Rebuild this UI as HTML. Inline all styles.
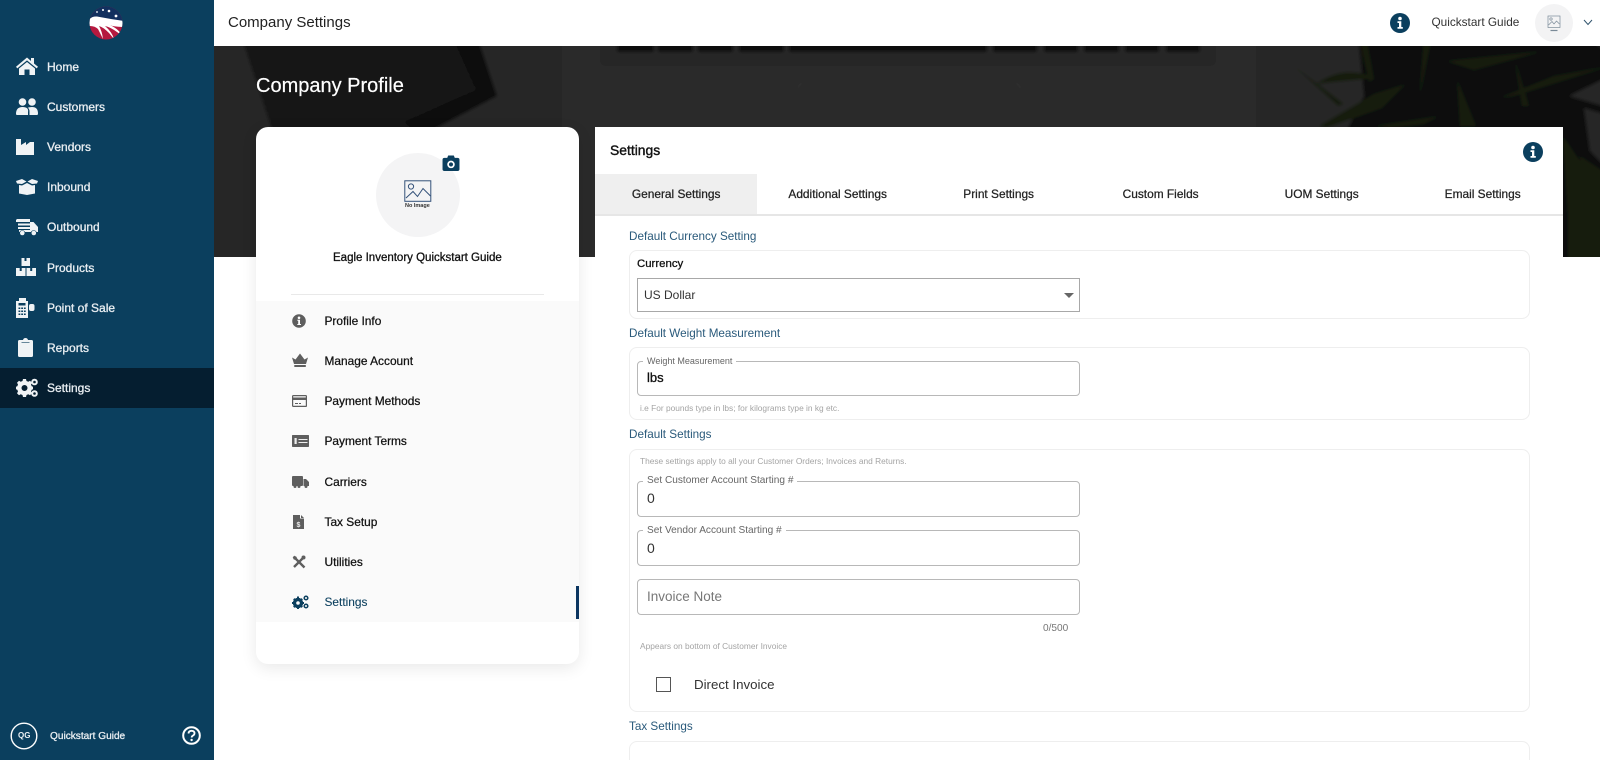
<!DOCTYPE html>
<html><head><meta charset="utf-8"><title>Company Settings</title>
<style>
*{box-sizing:border-box}
html,body{margin:0;padding:0;width:1600px;height:760px;overflow:hidden;background:#fff;font-family:"Liberation Sans",sans-serif;color:#000}
body{position:relative;filter:blur(.3px)}
.a{position:absolute}
.t{position:absolute;white-space:nowrap;line-height:1}
.side{left:0;top:0;width:214px;height:760px;background:#0b3f5e}
.nav{color:#e9eef2;font-size:12px;left:47px;-webkit-text-stroke:.3px #e9eef2}
.prof{font-size:11.9px;left:324.5px;color:#111;-webkit-text-stroke:.25px #111}
.tab{position:absolute;top:174px;width:161.3px;height:40px;line-height:40px;text-align:center;font-size:11.9px;color:#222;-webkit-text-stroke:.25px #222}
.sec{left:629px;color:#2a5a7b;font-size:11.7px}
.fs{position:absolute;left:629px;width:901px;border:1px solid #eeeeee;border-radius:8px}
.inp{position:absolute;left:637px;width:443px;border:1.5px solid #b8b8b8;border-radius:4px;background:#fff}
.lab{position:absolute;left:643px;background:#fff;padding:0 4px;font-size:10.1px;line-height:10px;color:#666;white-space:nowrap}
.help{left:640px;font-size:8.35px;color:#a4a4a4}
.val{left:647px;font-size:14px;color:#333}
svg{position:absolute;display:block}
</style></head>
<body>
<!-- hero -->
<svg class="a" style="left:214px;top:46px" width="1386" height="211" viewBox="0 0 1386 211">
<defs>
<pattern id="dots" width="5" height="5" patternUnits="userSpaceOnUse" patternTransform="rotate(25)"><rect width="5" height="5" fill="#131313"/><circle cx="2.500" cy="2.500" r="1" fill="#1d1d1d"/></pattern>
<filter id="bl"><feGaussianBlur stdDeviation="1.500"/></filter>
</defs>
<rect width="1386" height="211" fill="#2a2a2a"/>
<g filter="url(#bl)">
<rect x="-10" y="-10" width="358" height="231" fill="#252525"/>
<path d="M27 -10H263L283 50 207 90H60Z" fill="url(#dots)"/>
<path d="M238 -10H263L283 50 207 90 190 76 262 44Z" fill="#0d0d0d"/>
<rect x="348" y="-10" width="694" height="231" fill="#2c2c2c"/>
<path d="M386 -10H1002V14Q1002 20 995 20H393Q386 20 386 14Z" fill="#272727"/>
<g fill="#0f0f0f">
<rect x="403" y="-8" width="37" height="14" rx="2"/>
<rect x="444" y="-8" width="35" height="14" rx="2"/>
<rect x="484" y="-8" width="35" height="14" rx="2"/>
<rect x="525" y="-8" width="45" height="14" rx="2"/>
<rect x="575" y="-8" width="198" height="14" rx="2"/>
<rect x="779" y="-8" width="44" height="14" rx="2"/>
<rect x="830" y="-8" width="34" height="14" rx="2"/>
<rect x="870" y="-8" width="35" height="14" rx="2"/>
<rect x="911" y="-8" width="34" height="14" rx="2"/>
<rect x="952" y="-8" width="34" height="14" rx="2"/>
</g>
<rect x="583" y="37" width="224" height="180" rx="8" fill="#2c2c2c" stroke="#323232" stroke-width="1"/>
<rect x="1042" y="-10" width="354" height="231" fill="#262626"/>
<path d="M1144 -10H1396V30L1355 50 1396 62V221H1200L1130 90 1150 50Z" fill="#090a08"/>
<path d="M1370 -10H1396V7Z" fill="#2b2b2b"/>
<g fill="#191f10">
<path d="M1080 20L1130 58 1124 60Z"/>
<path d="M1102 38Q1130 18 1162 32L1120 36Z"/>
<path d="M1105 80L1160 48 1192 38 1168 62 1112 82Z"/>
<path d="M1145 -10H1152L1160 33 1155 36Z"/>
<path d="M1210 -10H1218L1205 55Z"/>
<path d="M1243 33L1262 80H1246Z"/>
<path d="M1300 10L1315 60 1308 60Z"/>
<path d="M1396 20L1300 50 1285 52 1340 30Z"/>
<path d="M1160 80L1226 70 1210 78 1176 82Z"/>
<path d="M1232 15L1330 5 1260 24Z"/>
<path d="M1366 110L1396 130V200L1372 170Z"/>
<path d="M1349 90L1396 160V221H1354V170Z"/>
</g>
<path d="M1370 62L1396 70V125L1376 105Z" fill="#252525"/>
</g>
</svg>

<!-- top bar -->
<div class="a" style="left:214px;top:0;width:1386px;height:46px;background:#fff"></div>
<div class="t" style="left:228px;top:15px;font-size:15px;color:#222">Company Settings</div>
<svg style="left:1390px;top:13px" width="20" height="20" viewBox="0 0 20 20"><circle cx="10" cy="10" r="10" fill="#0b3f5e"/><circle cx="10" cy="5.500" r="1.800" fill="#fff"/><path d="M7.500 8.300H11.300V14H12.800V15.700H7.500V14H9V10H7.500Z" fill="#fff"/></svg>
<div class="t" style="left:1431.500px;top:17px;font-size:11.800px;color:#333">Quickstart Guide</div>
<div class="a" style="left:1535px;top:4px;width:38px;height:38px;border-radius:50%;background:#f3f3f4"></div>
<svg style="left:1547px;top:15px" width="14" height="18" viewBox="0 0 14 18" fill="none" stroke="#7a8a98" stroke-width=".7"><rect x="1" y="1" width="12" height="11.500"/><circle cx="4" cy="4" r="1.200"/><path d="M1.500 10L5 6.500 7 9 9.500 6 12.500 9"/><path d="M3.500 15.500H10.500" stroke-width="1.200"/></svg>
<svg style="left:1583px;top:19px" width="10" height="7" viewBox="0 0 10 7" fill="none" stroke="#33566f" stroke-width="1"><path d="M1 1L5 5.500 9 1"/></svg>

<!-- sidebar -->
<div class="a side"></div>
<div class="a" style="left:0;top:368px;width:214px;height:40px;background:#051e30"></div>
<svg style="left:88px;top:6px" width="36" height="34" viewBox="0 0 36 34"><defs><clipPath id="lg"><circle cx="18" cy="17" r="16.500"/></clipPath></defs><g clip-path="url(#lg)"><rect width="36" height="34" fill="#b5193f"/><rect width="36" height="16" fill="#12305f"/><path d="M0 15Q3 10 9 10.500Q22 13 36 15V21Q26 21 22 19 32 24 33 29L29 26Q22 21 17 20 24 26 26 33L21 27Q15 21 11 20 14 25 15 33L10 23Q7 20 2 20L0 20Z" fill="#fff"/></g><g fill="#fff"><circle cx="9" cy="6" r=".9"/><circle cx="15" cy="4" r="1"/><circle cx="21" cy="5" r="1.300"/><circle cx="28" cy="10" r="1.400"/></g></svg>

<svg style="left:16px;top:57px" width="22" height="18" viewBox="0 0 22 18" fill="#f0f3f5"><path d="M11 .5L0 9.800 1.300 11.400 11 3.400 20.700 11.400 22 9.800 18 6.500V1H15V4Z"/><path d="M3 11.500L11 5 19 11.500V18H13.500V12.500H8.500V18H3Z"/></svg>
<div class="t nav" style="top:60.500px">Home</div>
<svg style="left:16px;top:98px" width="22" height="17" viewBox="0 0 22 17" fill="#f0f3f5"><circle cx="6.500" cy="4" r="3.800"/><circle cx="16" cy="4" r="3.800"/><path d="M0 16Q0 9 6.500 9T12 14V17H1Q0 17 0 16Z"/><path d="M13.500 17V13.500Q13.500 11 11.800 9.800Q13 9 16 9 22 9 22 15.500 22 17 21 17Z"/></svg>
<div class="t nav" style="top:100.500px">Customers</div>
<svg style="left:16px;top:139px" width="18" height="16" viewBox="0 0 18 16" fill="#f0f3f5"><path d="M0 0H5V6L10 3V6L14 3 18 3V16H0Z"/></svg>
<div class="t nav" style="top:141px">Vendors</div>
<svg style="left:16px;top:179px" width="22" height="16" viewBox="0 0 22 16" fill="#f0f3f5"><path d="M0 2L6 0 10.500 2.500 6 5 1 4.500Z"/><path d="M11.500 2.500L16 0 22 2 21 4.500 16 5Z"/><path d="M3 6L6 6.500 11 4 16 6.500 19 6V14.500L11 16 3 14.500Z"/></svg>
<div class="t nav" style="top:181px">Inbound</div>
<svg style="left:16px;top:219px" width="22" height="17" viewBox="0 0 22 17" fill="#f0f3f5"><path d="M1 0H14V3H0V1Z"/><rect x="2" y="4.500" width="12" height="2"/><rect x="2" y="8" width="12" height="2"/><path d="M3 11H14V3H17.500L22 8V13H20.500A3 3 0 0 0 15 13H9A3 3 0 0 0 3.500 13H3Z"/><circle cx="6.300" cy="14" r="2.300"/><circle cx="17.800" cy="14" r="2.300"/></svg>
<div class="t nav" style="top:221px">Outbound</div>
<svg style="left:16px;top:258px" width="20" height="18" viewBox="0 0 20 18" fill="#f0f3f5"><path d="M5.500 0H14V8H5.500Z"/><path d="M0 10H9.500V18H0Z"/><path d="M10.500 10H20V18H10.500Z"/><g fill="#0b3f5e"><rect x="8.500" y="0" width="2" height="3"/><rect x="3.700" y="10" width="2" height="3"/><rect x="14.200" y="10" width="2" height="3"/></g></svg>
<div class="t nav" style="top:262px">Products</div>
<svg style="left:16px;top:298px" width="19" height="20" viewBox="0 0 19 20" fill="#f0f3f5"><path d="M3 0H10V3H12V20H0V3H3Z"/><rect x="13" y="6" width="5.500" height="7" rx="2"/><g fill="#0b3f5e"><rect x="2.500" y="5" width="7" height="2.500"/><rect x="2.500" y="9.500" width="1.800" height="1.500"/><rect x="5.200" y="9.500" width="1.800" height="1.500"/><rect x="7.900" y="9.500" width="1.800" height="1.500"/><rect x="2.500" y="12.500" width="1.800" height="1.500"/><rect x="5.200" y="12.500" width="1.800" height="1.500"/><rect x="7.900" y="12.500" width="1.800" height="1.500"/><rect x="2.500" y="15.500" width="1.800" height="1.500"/><rect x="5.200" y="15.500" width="1.800" height="1.500"/><rect x="7.900" y="15.500" width="1.800" height="1.500"/></g></svg>
<div class="t nav" style="top:301.500px">Point of Sale</div>
<svg style="left:18px;top:338px" width="15" height="19" viewBox="0 0 15 19"><path fill="#f0f3f5" d="M1.500 2H5Q5.500 0 7.500 0T10 2H13.500Q15 2 15 3.500V17.500Q15 19 13.500 19H1.500Q0 19 0 17.500V3.500Q0 2 1.500 2Z"/><path d="M3.500 4.300H11.500" stroke="#0b3f5e" stroke-width=".6"/></svg>
<div class="t nav" style="top:342px">Reports</div>
<svg style="left:16px;top:378px" width="22" height="20" viewBox="0 0 22 20" fill="#f0f3f5"><path fill-rule="evenodd" d="M6 3H9L9.500 5 11.300 5.800 13 4.700 15 6.800 14 8.500 14.700 10.200 16 10.700V13.300L14.700 13.800 14 15.500 15 17.200 13 19.300 11.300 18.200 9.500 19 9 21H6L5.500 19 3.700 18.200 2 19.300 0 17.200 1 15.500.3 13.800-1 13.300V10.700L.3 10.200 1 8.500 0 6.800 2 4.700 3.700 5.800 5.500 5ZM7.500 9A3 3 0 1 0 7.500 15 3 3 0 1 0 7.500 9Z" transform="translate(1 -2)"/><circle cx="18.500" cy="4" r="2.300" fill="none" stroke="#f0f3f5" stroke-width="2"/><circle cx="18.500" cy="15.500" r="2.300" fill="none" stroke="#f0f3f5" stroke-width="2"/></svg>
<div class="t nav" style="top:382px">Settings</div>

<svg style="left:10px;top:722px" width="28" height="28" viewBox="0 0 28 28"><circle cx="14" cy="14" r="12.800" fill="none" stroke="#fff" stroke-width="1.400"/></svg>
<div class="t" style="left:18px;top:732px;font-size:8px;font-weight:bold;color:#eef2f5">QG</div>
<div class="t nav" style="left:50px;top:731.500px;font-size:10.100px">Quickstart Guide</div>
<svg style="left:182px;top:726px" width="19" height="19" viewBox="0 0 19 19"><circle cx="9.500" cy="9.500" r="8.300" fill="none" stroke="#fff" stroke-width="2"/><path d="M6.500 7.500Q6.700 4.800 9.500 4.800 12.500 4.800 12.500 7.300 12.500 8.800 10.800 9.700 9.700 10.300 9.700 11.500" fill="none" stroke="#fff" stroke-width="1.800"/><circle cx="9.600" cy="14" r="1.200" fill="#fff"/></svg>

<div class="t" style="left:256px;top:76px;font-size:20px;color:#fff;-webkit-text-stroke:.2px #fff">Company Profile</div>

<!-- profile card -->
<div class="a" style="left:256px;top:127px;width:323px;height:537px;background:#fff;border-radius:12px;box-shadow:0 4px 16px rgba(0,0,0,.09)"></div>
<div class="a" style="left:376px;top:153px;width:84px;height:84px;border-radius:50%;background:#f4f4f5"></div>
<svg style="left:404px;top:180px" width="28" height="30" viewBox="0 0 28 30" fill="none" stroke="#34527a" stroke-width="1"><rect x=".8" y=".8" width="26" height="20.500"/><circle cx="7" cy="6.500" r="2.600"/><path d="M2 18L9 11.500 13.500 16.500 19 8.500 26.500 16"/></svg>
<div class="t" style="left:405px;top:204px;font-size:5.500px;color:#333;font-weight:bold">No Image</div>
<svg style="left:442px;top:155px" width="18" height="16" viewBox="0 0 18 17"><path fill-rule="evenodd" d="M2 3H5L6 .5H12L13 3H16Q18 3 18 5V15Q18 17 16 17H2Q0 17 0 15V5Q0 3 2 3ZM9 6A4 4 0 1 0 9 14 4 4 0 1 0 9 6ZM9 7.800A2.200 2.200 0 1 1 9 12.200 2.200 2.200 0 1 1 9 7.800Z" fill="#0b3f5e"/></svg>
<div class="t" style="left:333px;top:252.500px;font-size:11.500px;color:#111;-webkit-text-stroke:.3px #111">Eagle Inventory Quickstart Guide</div>
<div class="a" style="left:291px;top:294px;width:253px;height:1px;background:#e9e9e9"></div>
<div class="a" style="left:256px;top:301px;width:323px;height:321px;background:#fafafa"></div>
<div class="a" style="left:576px;top:586px;width:3px;height:33px;background:#0b3560"></div>

<svg style="left:292px;top:314px" width="14" height="14" viewBox="0 0 14 14"><circle cx="7" cy="7" r="6.800" fill="#5e5e5e"/><circle cx="7" cy="3.800" r="1.300" fill="#fff"/><path d="M5.300 5.800H8V10H9V11H5.300V10H6.200V6.800H5.300Z" fill="#fff"/></svg>
<div class="t prof" style="top:315.500px">Profile Info</div>
<svg style="left:292px;top:353px" width="16" height="14" viewBox="0 0 16 14" fill="#5e5e5e"><path d="M0 4.500L3.500 6.500 8 .5 12.500 6.500 16 4.500 14 11H2Z"/><rect x="2.300" y="12" width="11.500" height="2"/></svg>
<div class="t prof" style="top:355.500px">Manage Account</div>
<svg style="left:292px;top:395px" width="15" height="12" viewBox="0 0 15 12"><rect x=".6" y=".6" width="13.800" height="10.800" rx=".7" fill="none" stroke="#5e5e5e" stroke-width="1.200"/><rect x="1" y="2.500" width="13" height="2.500" fill="#5e5e5e"/><rect x="3" y="8" width="3" height="1" fill="#5e5e5e"/><rect x="7" y="8" width="2" height="1" fill="#5e5e5e"/></svg>
<div class="t prof" style="top:396px">Payment Methods</div>
<svg style="left:292px;top:435px" width="17" height="12" viewBox="0 0 17 12"><rect width="17" height="12" rx=".7" fill="#5e5e5e"/><rect x="6.500" y="4" width="9" height="1" fill="#eee"/><rect x="6.500" y="7" width="9" height="1" fill="#eee"/><rect x="2.500" y="3" width="2.200" height="6" fill="#eee"/></svg>
<div class="t prof" style="top:436px">Payment Terms</div>
<svg style="left:292px;top:476px" width="17" height="12" viewBox="0 0 17 12" fill="#5e5e5e"><rect width="11" height="10" rx="1"/><path d="M11.500 3H14L17 6V10H11.500Z"/><circle cx="3" cy="10.500" r="1.500"/><circle cx="7" cy="10.500" r="1.500"/><circle cx="14" cy="10.500" r="1.500"/></svg>
<div class="t prof" style="top:476.500px">Carriers</div>
<svg style="left:293px;top:515px" width="11" height="14" viewBox="0 0 11 14" fill="#5e5e5e"><path d="M0 0H7V3.500H11V14H0Z"/><path d="M8 0L11 3H8Z"/><text x="5.500" y="12" font-size="7" font-weight="bold" text-anchor="middle" fill="#eee" font-family="Liberation Sans">$</text></svg>
<div class="t prof" style="top:517px">Tax Setup</div>
<svg style="left:292px;top:555px" width="14" height="14" viewBox="0 0 14 14" fill="none" stroke="#5e5e5e"><path d="M1.500 1.500L12.500 12.500" stroke-width="2.400"/><path d="M12.500 1.500L2 12" stroke-width="2.400"/><circle cx="3" cy="3" r="1.800" fill="#5e5e5e" stroke="none"/><circle cx="11.500" cy="2.500" r="2" fill="#5e5e5e" stroke="none"/></svg>
<div class="t prof" style="top:557px">Utilities</div>
<svg style="left:292px;top:595px" width="17" height="14" viewBox="0 0 17 14"><circle cx="6" cy="8" r="3.700" fill="none" stroke="#0b3f5e" stroke-width="3"/><g stroke="#0b3f5e" stroke-width="2"><path d="M6 1.500V14"/><path d="M0 8H12"/><path d="M1.800 3.800L10.200 12.200"/><path d="M10.200 3.800L1.800 12.200"/></g><circle cx="6" cy="8" r="1.800" fill="#fafafa"/><circle cx="14" cy="3" r="1.800" fill="none" stroke="#0b3f5e" stroke-width="1.500"/><circle cx="14" cy="11" r="1.800" fill="none" stroke="#0b3f5e" stroke-width="1.500"/></svg>
<div class="t prof" style="top:597px;color:#0b3f5e;-webkit-text-stroke:.1px #0b3f5e">Settings</div>

<!-- settings panel -->
<div class="a" style="left:595px;top:127px;width:968px;height:633px;background:#fff"></div>
<div class="t" style="left:610px;top:143.500px;font-size:13.900px;color:#111;-webkit-text-stroke:.4px #111">Settings</div>
<svg style="left:1523px;top:142px" width="20" height="20" viewBox="0 0 20 20"><circle cx="10" cy="10" r="10" fill="#0b3f5e"/><circle cx="10" cy="5.500" r="1.800" fill="#fff"/><path d="M7.500 8.300H11.300V14H12.800V15.700H7.500V14H9V10H7.500Z" fill="#fff"/></svg>
<div class="a" style="left:595px;top:174px;width:162px;height:40px;background:#efefef"></div>
<div class="a" style="left:595px;top:214px;width:968px;height:2px;background:#e6e6e6"></div>
<div class="tab" style="left:595.500px">General Settings</div>
<div class="tab" style="left:757px">Additional Settings</div>
<div class="tab" style="left:918px">Print Settings</div>
<div class="tab" style="left:1080px">Custom Fields</div>
<div class="tab" style="left:1241px">UOM Settings</div>
<div class="tab" style="left:1402px">Email Settings</div>

<div class="t sec" style="top:230.500px">Default Currency Setting</div>
<div class="fs" style="top:250px;height:69px"></div>
<div class="t" style="left:637px;top:258.500px;font-size:11.400px;color:#111;-webkit-text-stroke:.3px #111">Currency</div>
<div class="a" style="left:637px;top:278px;width:443px;height:34px;border:1.500px solid #a8a8a8;background:#fff"></div>
<div class="t" style="left:644px;top:289px;font-size:12px;color:#333">US Dollar</div>
<svg style="left:1064px;top:293px" width="10" height="5" viewBox="0 0 10 5"><path d="M0 0H10L5 5Z" fill="#666"/></svg>

<div class="t sec" style="top:327.500px">Default Weight Measurement</div>
<div class="fs" style="top:347px;height:73px"></div>
<div class="inp" style="top:361px;height:35px"></div>
<div class="lab" style="top:356px;font-size:9px">Weight Measurement</div>
<div class="t" style="left:647px;top:371px;font-size:13px;color:#111;-webkit-text-stroke:.3px #111">lbs</div>
<div class="t help" style="top:404px">i.e For pounds type in lbs; for kilograms type in kg etc.</div>

<div class="t sec" style="top:428.500px">Default Settings</div>
<div class="fs" style="top:449px;height:263px"></div>
<div class="t help" style="top:457px">These settings apply to all your Customer Orders; Invoices and Returns.</div>
<div class="inp" style="top:481px;height:36px"></div>
<div class="lab" style="top:476px">Set Customer Account Starting #</div>
<div class="t val" style="top:491px">0</div>
<div class="inp" style="top:530px;height:36px"></div>
<div class="lab" style="top:526px">Set Vendor Account Starting #</div>
<div class="t val" style="top:541px">0</div>
<div class="inp" style="top:579px;height:36px"></div>
<div class="t" style="left:647px;top:589.500px;font-size:13.500px;color:#777">Invoice Note</div>
<div class="t" style="left:1043px;top:624px;font-size:10.100px;color:#777">0/500</div>
<div class="t help" style="top:642px">Appears on bottom of Customer Invoice</div>
<div class="a" style="left:656px;top:677px;width:15px;height:15px;border:1.500px solid #555;background:#fff"></div>
<div class="t" style="left:694px;top:678px;font-size:13.300px;color:#333">Direct Invoice</div>
<div class="t sec" style="top:720.500px">Tax Settings</div>
<div class="fs" style="top:741px;height:40px"></div>
</body></html>
